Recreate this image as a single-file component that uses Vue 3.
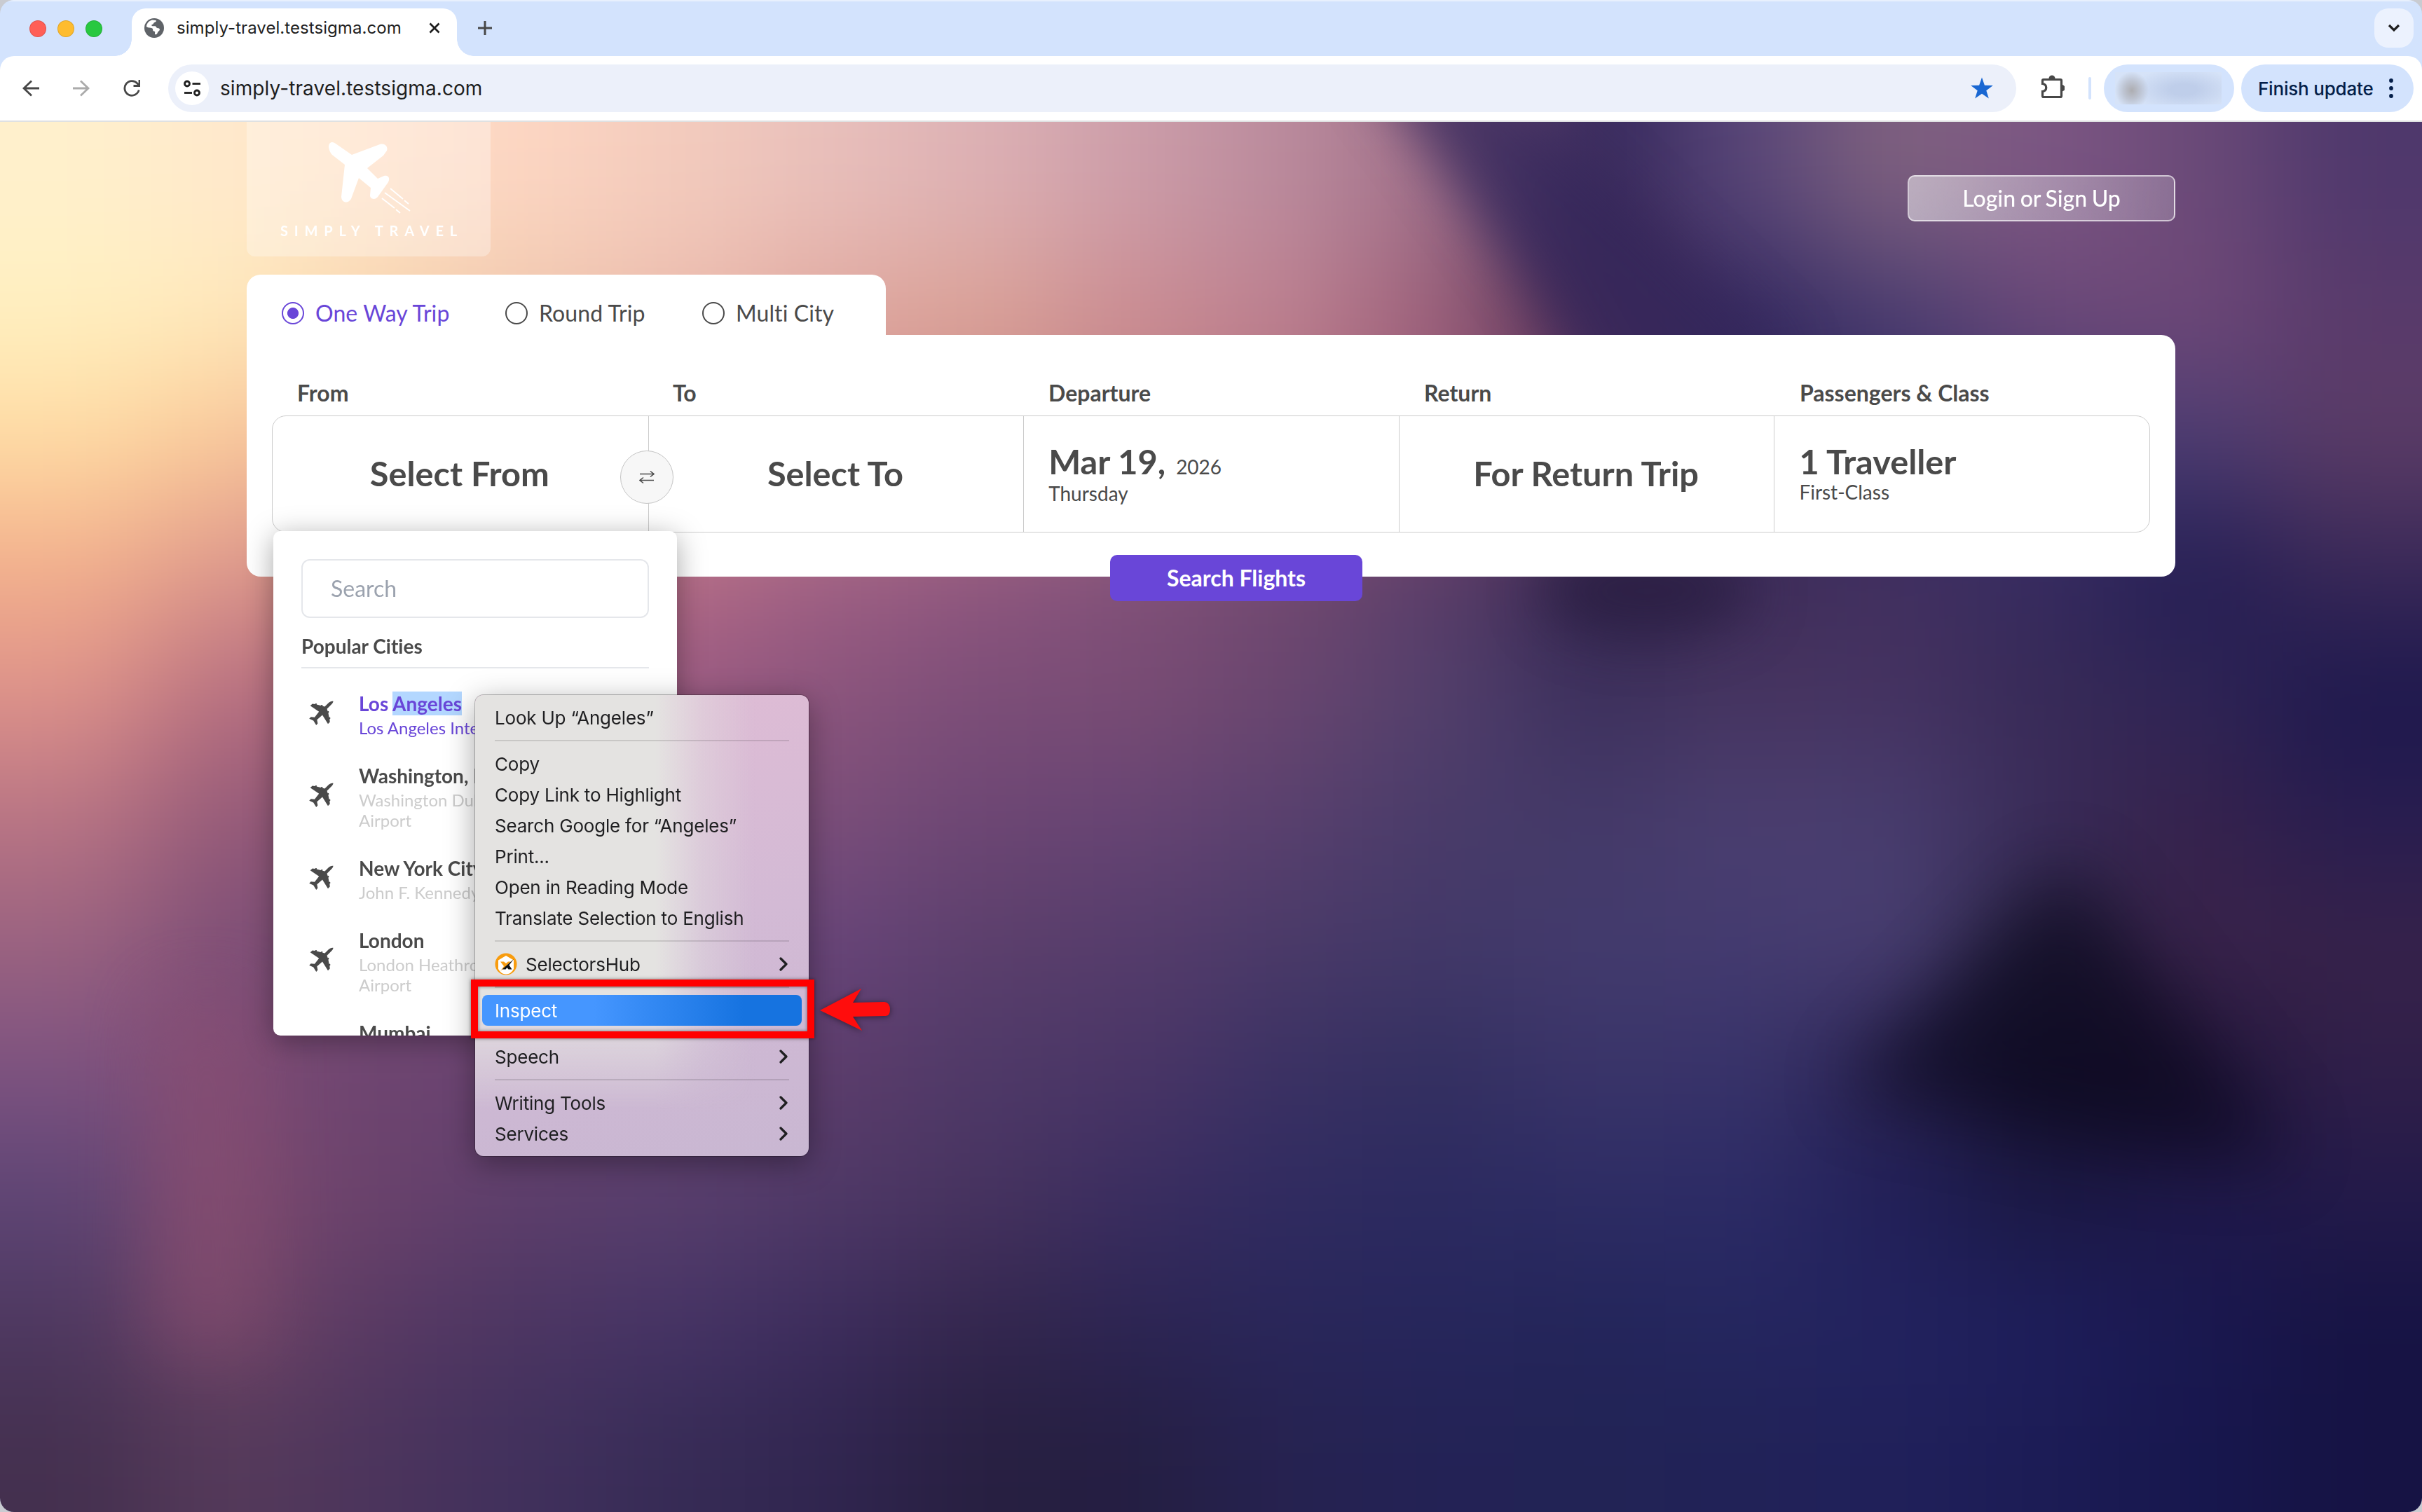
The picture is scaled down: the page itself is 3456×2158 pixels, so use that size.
<template>
  <div class="window">
    <!-- tab strip -->
    <div class="tab-strip">
      <div class="lights">
        <span class="light red"></span>
        <span class="light yellow"></span>
        <span class="light green"></span>
      </div>
      <div class="tab">
        <svg class="favicon" viewBox="0 0 28 28">
          <circle cx="14" cy="14" r="14" fill="#5f6368" />
          <path d="M3 12c0-4 3-8 8-9.500l5 .5c1 0 1.200 1 .6 1.800l-3 1.800c-.6.5-.4 1.600-1.300 2l-1.600.6c-1 .5-.2 2 1 2h3.600c1.300 0 1.500 2 2.700 2.600 1.400.7 3.400.4 3.800 1.600.6 1.600-.8 2.600-2 3.600-1.200 1.200-1 2.800-2.300 3.800-1 .8-2.600.6-2.500-.8l.2-2.400c0-1-1.800-1-2.600-1.700-.9-.8 0-2.300-1-3.200C10.400 13.500 5 14 3 12z" fill="#fff" />
        </svg>
        <span class="tab-title">simply-travel.testsigma.com</span>
        <svg class="tab-close" viewBox="0 0 16 16"><path d="M1.500 1.500l13 13M14.500 1.500l-13 13" /></svg>
      </div>
      <svg class="new-tab" viewBox="0 0 20 20"><path d="M10 0v20M0 10h20" /></svg>
      <div class="tab-search">
        <svg viewBox="0 0 18 12"><path d="M2 2l7 7 7-7" /></svg>
      </div>
    </div>

    <!-- toolbar -->
    <div class="toolbar">
      <svg class="nav" viewBox="0 0 24 24"><path d="M24 12H2M13 1.500L2 12l11 10.500" /></svg>
      <svg class="nav disabled" viewBox="0 0 24 24"><path d="M0 12h22M11 1.500L22 12 11 22.500" /></svg>
      <svg class="nav" viewBox="0 0 24 24"><path d="M22.200 14.500A10.300 10.300 0 1 1 20 5.200l2 2.300M23 0v8.500h-8.500" /></svg>
      <div class="omnibox">
        <span class="site-chip">
          <svg viewBox="0 0 24 24">
            <circle cx="5" cy="5.500" r="3.500" /><path d="M12.500 5.500H24" />
            <circle cx="19" cy="18.500" r="3.500" /><path d="M1 18.500h11" />
          </svg>
        </span>
        <span class="url">simply-travel.testsigma.com</span>
        <svg class="star" viewBox="0 0 32 32"><path d="M16 .5l3.900 11.200 11.900.3-9.500 7.200 3.500 11.400L16 23.700 6.200 30.600l3.500-11.400L.2 12l11.900-.3z" /></svg>
      </div>
      <svg class="puzzle" viewBox="0 0 34 34">
        <path class="line" d="M4 6.500h24q1.500 0 1.500 1.500v22q0 1.500-1.500 1.500H4q-1.500 0-1.500-1.500v-6.500c7-1 7-10 0-11V8q0-1.500 1.500-1.500z" />
        <path class="knob" d="M11.500 5a4.500 4.500 0 0 1 9 0zM30 14a4.500 4.500 0 0 1 0 9.500z" />
      </svg>
      <span class="bar-sep"></span>
      <div class="profile"><span class="profile-blur"></span></div>
      <div class="update">
        <span>Finish update</span>
        <svg viewBox="0 0 6 28"><circle cx="3" cy="3" r="2.900" /><circle cx="3" cy="14" r="2.900" /><circle cx="3" cy="25" r="2.900" /></svg>
      </div>
    </div>

    <!-- page -->
    <main class="page">
      <svg class="backdrop" viewBox="0 0 3456 1984" preserveAspectRatio="none">
        <defs>
          <filter id="soft" filterUnits="userSpaceOnUse" x="-500" y="-500" width="4456" height="2984" color-interpolation-filters="sRGB">
            <feGaussianBlur stdDeviation="85" />
          </filter>
          <filter id="mid" filterUnits="userSpaceOnUse" x="-500" y="-500" width="4456" height="2984" color-interpolation-filters="sRGB">
            <feGaussianBlur stdDeviation="38" />
          </filter>
          <filter id="wide" filterUnits="userSpaceOnUse" x="-500" y="-500" width="4456" height="2984" color-interpolation-filters="sRGB">
            <feGaussianBlur stdDeviation="52" />
          </filter>
        </defs>
        <g filter="url(#soft)">
          <rect v-for="c in cells" :key="c.key" :x="c.x" :y="c.y" width="218" height="182.500" :fill="c.fill" />
        </g>
        <g filter="url(#mid)">
          <path d="M1950-80L2130-80 2560 340 2300 440 2190 240z" fill="#32265a" opacity=".72" />
          <ellipse cx="2350" cy="670" rx="150" ry="65" fill="#271b3e" opacity=".7" />
        </g>
        <path filter="url(#wide)" d="M2950 1060L3270 1480 3060 1470 2630 1380z" fill="#070518" opacity=".6" />
        <path filter="url(#wide)" d="M230 1250L360 1250 370 1750 220 1750z" fill="#8c4f72" opacity=".5" />
      </svg>

      <header class="page-head">
        <div class="logo">
          <svg class="logo-plane" viewBox="0 0 120 104">
            <path d="M1 8C1 1 6-1 11 3L34 19 74 4C81 2 86 7 84 13L79 20 56 38 71 53 80 49C86 48 89 52 86 58L71 79C67 84 60 82 60 77L61 66 44 52 34 79C32 88 20 90 19 79L24 33 6 19Q2 15 1 8z" />
            <path class="trail" d="M89 67l18 15M109 84l6 5M81 73l36 26M77 81l18 14M97 97l6 5" />
          </svg>
          <span class="logo-name">SIMPLY TRAVEL</span>
        </div>
        <button class="login">Login or Sign Up</button>
      </header>

      <section class="booking">
        <div class="trip-tabs">
          <label v-for="t in trips" :key="t.name" class="trip" :class="{ active: t.name === activeTrip }">
            <span class="radio"></span>
            <span :class="t.cls">{{ t.name }}</span>
          </label>
        </div>
        <div class="panel">
          <div class="labels">
            <span v-for="l in labels" :key="l">{{ l }}</span>
          </div>
          <div class="fields">
            <div class="field center">Select From</div>
            <div class="field center">Select To</div>
            <div class="field">
              <div class="main">Mar 19,<small>2026</small></div>
              <div class="sub day">Thursday</div>
            </div>
            <div class="field center">For Return Trip</div>
            <div class="field">
              <div class="main">1 Traveller</div>
              <div class="sub">First-Class</div>
            </div>
            <span class="swap">
              <svg viewBox="0 0 22 20"><path d="M1 5.500h20M16 1.500l5 4-5 4M21 14.500H1M6 10.500l-5 4 5 4" /></svg>
            </span>
          </div>
          <button class="search-btn">Search Flights</button>
        </div>

        <div class="dropdown">
          <div class="search-box">Search</div>
          <div class="popular">Popular Cities</div>
          <div v-for="c in cities" :key="c.name" class="city" :class="{ active: c.active }">
            <svg class="plane" viewBox="0 0 38 38">
              <path d="M37 .8c-2.800-.4-5.200.6-7.200 2.600l-5.600 5.700-3.400-1 .3-1.500-1.900-.2-1.100 1-6.200-1.600.4-1.300-1.900-.3-1.200 1-3.600-.4L2.300 7.700l13.200 8.900-6.600 8.600-5.600-.7L.8 27.200l6.300 2.900 4.200 6.800 2.300-2.500-1.100-5.600 8.100-7.200 8.400 13.500 2.900-2.900-.4-4.200 1.200-1.400-.6-1.800-1.300.5-1.300-6.600 1-1.200-.5-1.900-1.300.4-1.200-3.600 5.800-5.700c1.900-2 3.500-3.400 3.700-5.900z" />
            </svg>
            <div class="city-text">
              <div class="city-name">{{ c.name }}<mark v-if="c.marked">{{ c.marked }}</mark></div>
              <div class="city-airport">{{ c.airport }}</div>
            </div>
          </div>
        </div>
      </section>
    </main>

    <!-- context menu -->
    <div class="menu">
      <template v-for="(m, i) in menu" :key="i">
        <div v-if="m === '-'" class="menu-sep"></div>
        <div v-else class="menu-item" :class="{ highlighted: m.on }">
          <svg v-if="m.icon" class="hub" viewBox="0 0 32 32">
            <circle cx="16" cy="16" r="15.500" fill="#f89c0e" />
            <path d="M16 4l11 6.500V23q-4 7.500-11 7.500T5 23V10.500z" fill="#fff" />
            <path d="M8 12.500h5l3 2.500 3-2.500h4L8 26l5-7z" fill="#f89c0e" />
            <path d="M27 9L10.500 23.500h5l2-2.500 2 2.500h5l-4-6z" fill="#111" />
          </svg>
          <span>{{ m.text }}</span>
          <svg v-if="m.more" class="chevron" viewBox="0 0 12 20"><path d="M2 2l8 8-8 8" /></svg>
        </div>
      </template>
    </div>

    <!-- callout -->
    <div class="callout-box"></div>
    <svg class="callout-arrow" viewBox="0 0 110 70">
      <path d="M5 37L64 6 52 26 97 25Q105 26 105 36T97 45L52 46 65 66z" />
    </svg>
  </div>
</template>

<script setup>
import { ref } from 'vue'

const activeTrip = ref('One Way Trip')
const trips = [
  { name: 'One Way Trip', cls: 't1' },
  { name: 'Round Trip', cls: 't2' },
  { name: 'Multi City', cls: 't3' }
]
const labels = ['From', 'To', 'Departure', 'Return', 'Passengers & Class']

const cities = [
  { name: 'Los ', marked: 'Angeles', airport: 'Los Angeles Inte', active: true },
  { name: 'Washington, D', airport: 'Washington Dul\nAirport' },
  { name: 'New York City', airport: 'John F. Kennedy' },
  { name: 'London', airport: 'London Heathro\nAirport' },
  { name: 'Mumbai', airport: '\n\n' }
]

const menu = [
  { text: 'Look Up “Angeles”' },
  '-',
  { text: 'Copy' },
  { text: 'Copy Link to Highlight' },
  { text: 'Search Google for “Angeles”' },
  { text: 'Print...' },
  { text: 'Open in Reading Mode' },
  { text: 'Translate Selection to English' },
  '-',
  { text: 'SelectorsHub', icon: true, more: true },
  '-',
  { text: 'Inspect', on: true },
  '-',
  { text: 'Speech', more: true },
  '-',
  { text: 'Writing Tools', more: true },
  { text: 'Services', more: true }
]

// mesh colours of the sunset backdrop, one row per band
const mesh = [
  'fff0cc ffe9cc ffe0c8 fcd5c2 f3cbbd e8bfbb dcb0b4 cc9da9 ba8a9c a0708a 33265a 574578 80627f 7c5683 6b4a78 4f386c',
  'fff0c0 ffeabb f8d8b0 f0c8ae ecbcae e0a89f dba296 cb8c92 bd8090 9c6079 4a2a50 32285f 493c70 6b4878 704878 593a6b',
  'ffdba3 fac898 f0b8a0 e0a098 d89890 d09090 c88888 c08085 b07080 98587a 70406a 33265a 352b62 453a70 4d3d73 5b3c66',
  'f3b08c e09a8c d08a88 c07888 b56c86 a06084 91577f 80507a 704870 5a3c68 34264e 3d2c58 423060 352a60 221c52 3a2958',
  'de928a b87080 a8647f 9f5e82 9a5a82 8b547c 7c4e78 7a4c73 6a466f 53406c 3b2f5c 46345f 453260 372a56 2f2556 1d184d',
  'b87484 955a78 8c5478 88507a 84507a 7a4e79 6d4674 674474 58406e 493b69 443968 4b3f70 483d6e 3b2c5a 36224c 281d50',
  '9a6280 7d4e76 784c76 744a76 704876 66447a 5b3f6b 553c6b 4a3a68 423868 433b6d 443b70 493f72 2a2444 3a234b 37224a',
  '7d5280 7d4b74 6c4470 684270 623f6c 5c3c6a 4e3968 4a3566 3a3163 332f60 3a3469 38336a 2b2452 1a1434 22163a 301f49',
  '5e4575 7d4a6e 6a426c 5d3f6c 583f6d 4f3967 47335f 3a2d60 302b60 2b2a60 2d2c64 2c2b66 211f58 1a1842 1e184a 231a4a',
  '4e3860 704566 573963 4b3562 453365 3c2c5c 33264d 2c2553 29265a 26265b 23255a 24265f 23235f 1e1e5c 1a1850 161344',
  '44304f 553a5a 4b345c 40305c 362b55 30254f 271f40 241e42 262250 232255 222355 212257 20205a 1c1c55 17174e 161344'
].map(r => r.split(' '))

const clamp = (v, max) => Math.min(Math.max(v, 0), max)

// two extra cells on every side keep the blur opaque at the edges
const cells = []
for (let r = -2; r < 13; r++) {
  for (let c = -2; c < 18; c++) {
    cells.push({
      key: `${r}:${c}`,
      x: c * 216,
      y: r * 180.5,
      fill: '#' + mesh[clamp(r, 10)][clamp(c, 15)]
    })
  }
}
</script>

<style>
body {
  margin: 0;
  overflow: hidden;
  background: #c9cbd1;
}
</style>

<style scoped>
.window {
  position: relative;
  display: flex;
  flex-direction: column;
  width: 3456px;
  height: 2158px;
  overflow: hidden;
  border-radius: 20px;
  background: #d3e3fd;
  font-family: Lato, "Liberation Sans", sans-serif;
  font-variant-ligatures: none;
  color: #4a4a4a;
}

button {
  font-family: inherit;
  padding: 0 0 2px;
}

svg {
  display: block;
  flex: none;
  fill: none;
}

/* tab strip */
.tab-strip {
  display: flex;
  height: 80px;
  box-sizing: border-box;
  padding: 12px 12px 0 42px;
  box-shadow: inset 0 2px 0 #e8f0fd;
  font-family: Inter, "Liberation Sans", sans-serif;
}

.lights {
  display: flex;
  gap: 16px;
  padding-top: 17px;
  width: 146px;
}

.light {
  width: 24px;
  height: 24px;
  box-sizing: border-box;
  border-radius: 50%;
  border: 1px solid rgba(0, 0, 0, 0.12);
}

.red { background: #ff5f57; }
.yellow { background: #febc2e; }
.green { background: #28c840; }

.tab {
  position: relative;
  display: flex;
  align-items: center;
  width: 464px;
  height: 68px;
  box-sizing: border-box;
  padding: 0 24px 12px 18px;
  border-radius: 20px 20px 0 0;
  background: #fff;
}

.tab::before,
.tab::after {
  content: '';
  position: absolute;
  bottom: 0;
  width: 24px;
  height: 24px;
}

.tab::before {
  right: 100%;
  background: radial-gradient(circle at 0 0, transparent 23.5px, #fff 24px);
}

.tab::after {
  left: 100%;
  background: radial-gradient(circle at 100% 0, transparent 23.5px, #fff 24px);
}

.favicon {
  width: 28px;
  height: 28px;
}

.tab-title {
  flex: 1;
  margin-left: 18px;
  padding-bottom: 2px;
  font-size: 24px;
  letter-spacing: 0.06px;
  color: #1f1f1f;
  white-space: nowrap;
}

.tab-close {
  width: 16px;
  height: 16px;
  stroke: #1f1f1f;
  stroke-width: 2.8;
}

.new-tab {
  width: 20px;
  height: 20px;
  margin: 18px 0 0 30px;
  stroke: #474747;
  stroke-width: 3;
}

.tab-search {
  display: flex;
  align-items: center;
  justify-content: center;
  width: 56px;
  height: 56px;
  margin-left: auto;
  border-radius: 20px;
  background: #ecf2fe;
}

.tab-search svg {
  width: 18px;
  height: 12px;
  stroke: #1f1f1f;
  stroke-width: 3.2;
}

/* toolbar */
.toolbar {
  display: flex;
  align-items: center;
  height: 94px;
  box-sizing: border-box;
  padding: 0 12px 0 32px;
  border-bottom: 2px solid #dfe1e2;
  border-radius: 20px 20px 0 0;
  background: #fff;
  font-family: Inter, "Liberation Sans", sans-serif;
}

.nav {
  width: 24px;
  height: 24px;
  margin-right: 48px;
  stroke: #474747;
  stroke-width: 2.8;
}

.nav.disabled {
  stroke: #ababab;
}

.nav:nth-child(3) {
  margin-right: 40px;
}

.omnibox {
  display: flex;
  align-items: center;
  width: 2637px;
  height: 68px;
  box-sizing: border-box;
  padding: 0 33px 0 10px;
  border-radius: 34px;
  background: #ecf0fa;
}

.site-chip {
  display: flex;
  align-items: center;
  justify-content: center;
  width: 48px;
  height: 48px;
  border-radius: 50%;
  background: #fff;
}

.site-chip svg {
  width: 24px;
  height: 24px;
  stroke: #1f1f1f;
  stroke-width: 2.8;
}

.url {
  flex: 1;
  margin-left: 16px;
  font-size: 28px;
  letter-spacing: 0.08px;
  color: #1f1f1f;
}

.star {
  width: 32px;
  height: 32px;
  fill: #1967d2;
}

.puzzle {
  width: 34px;
  height: 34px;
  margin-left: 35px;
  margin-right: 1px;
  margin-bottom: 4px;
}

.puzzle .line {
  stroke: #474747;
  stroke-width: 3.2;
}

.puzzle .knob {
  fill: #474747;
}

.bar-sep {
  width: 4px;
  height: 32px;
  margin: 0 18px 0 33px;
  border-radius: 2px;
  background: #d3e3fd;
}

.profile,
.update {
  display: flex;
  align-items: center;
  height: 68px;
  box-sizing: border-box;
  border-radius: 34px;
  background: #d3e3fd;
}

.profile {
  width: 186px;
  padding: 0 16px;
}

.profile-blur {
  width: 152px;
  height: 46px;
  background:
    radial-gradient(ellipse 24px 27px at 24px 26px, #adadb1, rgba(180, 184, 195, 0.7) 50%, transparent),
    radial-gradient(ellipse 76px 32px at 98px 25px, #bfceea 25%, transparent),
    #d6e3f8;
}

.update {
  width: 246px;
  margin-left: 10px;
  padding-left: 24px;
  font-size: 26px;
  font-weight: 500;
  color: #041e49;
}

.update span {
  width: 187px;
  letter-spacing: -0.2px;
  white-space: nowrap;
}

.update svg {
  width: 6px;
  height: 28px;
  fill: #041e49;
}

/* page */
.page {
  position: relative;
  flex: 1;
  padding: 0 352px;
}

.backdrop {
  position: absolute;
  left: 0;
  top: 0;
  width: 3456px;
  height: 1984px;
}

.page-head {
  position: relative;
  display: flex;
  justify-content: space-between;
  height: 218px;
}

.logo {
  display: flex;
  flex-direction: column;
  align-items: center;
  width: 348px;
  height: 192px;
  border-radius: 0 0 12px 12px;
  background: rgba(255, 255, 255, 0.3);
}

.logo-plane {
  width: 120px;
  height: 104px;
  margin: 28px 0 0 4px;
  fill: #fff;
}

.trail {
  stroke: #fff;
  stroke-width: 1.8;
}

.logo-name {
  margin: 11px 0 0 9px;
  font-size: 20px;
  line-height: 24px;
  font-weight: 700;
  letter-spacing: 8.8px;
  color: #fff;
  white-space: nowrap;
}

.login {
  width: 382px;
  height: 66px;
  margin-top: 76px;
  border: 2px solid rgba(255, 255, 255, 0.6);
  border-radius: 10px;
  background: linear-gradient(95deg, rgba(255, 255, 255, 0.5), rgba(255, 255, 255, 0.2));
  font-size: 32px;
  font-weight: 500;
  word-spacing: -1.5px;
  color: #fff;
}

.booking {
  position: relative;
}

.trip-tabs {
  display: flex;
  align-items: center;
  width: 912px;
  height: 86px;
  box-sizing: border-box;
  padding: 23px 0 0 50px;
  border-radius: 20px 20px 0 0;
  background: #fff;
}

.trip {
  display: flex;
  align-items: center;
  font-size: 32px;
  letter-spacing: 0.1px;
  white-space: nowrap;
}

.t1 { width: 271px; }
.t2 { width: 233px; }

.radio {
  width: 32px;
  height: 32px;
  box-sizing: border-box;
  margin-right: 16px;
  border: 2px solid #4a4a4a;
  border-radius: 50%;
}

.trip.active {
  color: #6946d8;
}

.trip.active .radio {
  border-color: #6946d8;
  background: radial-gradient(circle, #6946d8 7.6px, transparent 8.4px);
}

.panel {
  position: relative;
  height: 345px;
  box-sizing: border-box;
  padding: 63px 36px 0;
  border-radius: 0 20px 20px 20px;
  background: #fff;
}

.labels {
  display: grid;
  grid-template-columns: repeat(5, 536px);
  height: 52px;
  padding-left: 36px;
  font-size: 32px;
  line-height: 40px;
  font-weight: 700;
}

.fields {
  position: relative;
  display: grid;
  grid-template-columns: repeat(5, 1fr);
  height: 167px;
  box-sizing: border-box;
  border: 1px solid #ccc;
  border-radius: 20px;
}

.field {
  display: flex;
  flex-direction: column;
  justify-content: center;
  padding: 0 0 5px 35px;
}

.field + .field {
  border-left: 1px solid #ccc;
}

.field.center {
  align-items: center;
  padding: 0 2px 3px 0;
  font-size: 48.7px;
  font-weight: 700;
}

.main {
  height: 58px;
  font-size: 48.7px;
  line-height: 58px;
  font-weight: 700;
}

.main small {
  margin-left: 15px;
  font-size: 28px;
  line-height: 1;
  font-weight: 400;
}

.sub {
  position: relative;
  margin-top: -2px;
  font-size: 28px;
  line-height: 34px;
}

.sub.day {
  margin: 0 0 -2px;
}

.swap {
  position: absolute;
  left: 496px;
  top: 49px;
  display: flex;
  align-items: center;
  justify-content: center;
  width: 76px;
  height: 76px;
  box-sizing: border-box;
  border: 1px solid #c4c4c4;
  border-radius: 50%;
  background: #f7f7f7;
}

.swap svg {
  width: 22px;
  height: 20px;
  stroke: #4a4a4a;
  stroke-width: 1.6;
}

.search-btn {
  position: absolute;
  left: 1232px;
  bottom: -35px;
  width: 360px;
  height: 66px;
  border: 0;
  border-radius: 10px;
  background: #6946d8;
  font-size: 32px;
  font-weight: 700;
  color: #fff;
}

/* city dropdown */
.dropdown {
  position: absolute;
  left: 38px;
  top: 366px;
  width: 576px;
  height: 720px;
  box-sizing: border-box;
  padding: 40px;
  overflow: hidden;
  border-radius: 10px;
  background: #fff;
  box-shadow: 0 8px 40px rgba(0, 0, 0, 0.35);
}

.search-box {
  height: 84px;
  box-sizing: border-box;
  padding-left: 40px;
  border: 2px solid #e5e7eb;
  border-radius: 12px;
  font-size: 32px;
  line-height: 80px;
  color: #9ca3af;
}

.popular {
  height: 72px;
  box-sizing: border-box;
  margin-bottom: 12px;
  padding-top: 22px;
  border-bottom: 2px solid #e5e7eb;
  font-size: 28px;
  line-height: 36px;
  font-weight: 700;
}

.city {
  display: flex;
  align-items: center;
  padding: 20px 0 15.2px 10px;
}

.plane {
  width: 37px;
  height: 36px;
  margin-right: 35px;
  margin-bottom: 4px;
  fill: #4a4a4a;
}

.city-text {
  flex: 1;
}

.city-name {
  font-size: 28px;
  line-height: 36px;
  font-weight: 700;
  white-space: pre;
}

.city-airport {
  margin-top: 2px;
  font-size: 24px;
  line-height: 29.5px;
  color: #ccc;
  white-space: pre;
}

.city.active .city-name,
.city.active .city-airport,
.city mark {
  color: #6946d8;
}

.city mark {
  background: #b3d7ff;
}

/* context menu */
.menu {
  position: absolute;
  left: 678px;
  top: 992px;
  width: 476px;
  height: 658px;
  box-sizing: border-box;
  padding: 10px;
  border-radius: 12px;
  background: linear-gradient(172deg, #dfbcd5, #d3bad5 50%, #c9b7d2);
  box-shadow: 0 0 0 1px rgba(0, 0, 0, 0.25), 0 10px 44px rgba(0, 0, 0, 0.36);
  font-family: Inter, "Liberation Sans", sans-serif;
  color: #1f1f21;
}

.menu::before {
  content: '';
  position: absolute;
  inset: 0;
  border-radius: 12px;
  background: linear-gradient(90deg, #e4e3e1 54%, rgba(228, 227, 225, 0.4) 68%, rgba(228, 227, 225, 0) 84%);
  mask-image: linear-gradient(#000 66%, transparent 90%);
}

.menu-item {
  position: relative;
  display: flex;
  align-items: center;
  height: 44px;
  padding: 0 20px 0 18px;
  border-radius: 8px;
  font-size: 26px;
  letter-spacing: -0.2px;
  white-space: nowrap;
}

.menu-item.highlighted {
  background: linear-gradient(90deg, #4596ff 35%, #1673e0 82%);
  color: #fff;
}

.menu-sep {
  position: relative;
  height: 2px;
  margin: 10px 18px;
  background: rgba(0, 0, 0, 0.12);
}

.hub {
  width: 32px;
  height: 32px;
  margin-right: 12px;
}

.chevron {
  width: 12px;
  height: 20px;
  margin-left: auto;
  stroke: #1f1f21;
  stroke-width: 3.2;
  stroke-linecap: round;
  stroke-linejoin: round;
}

/* callout */
.callout-box {
  position: absolute;
  left: 672px;
  top: 1398px;
  width: 490px;
  height: 84px;
  box-sizing: border-box;
  border: 10px solid #f00;
  box-shadow: 0 0 5px rgba(0, 0, 0, 0.5), inset 0 0 5px rgba(0, 0, 0, 0.5);
}

.callout-arrow {
  position: absolute;
  left: 1165px;
  top: 1405px;
  width: 110px;
  height: 70px;
  fill: #ff0d0d;
  filter: drop-shadow(0 1px 4px rgba(0, 0, 0, 0.5));
}
</style>
